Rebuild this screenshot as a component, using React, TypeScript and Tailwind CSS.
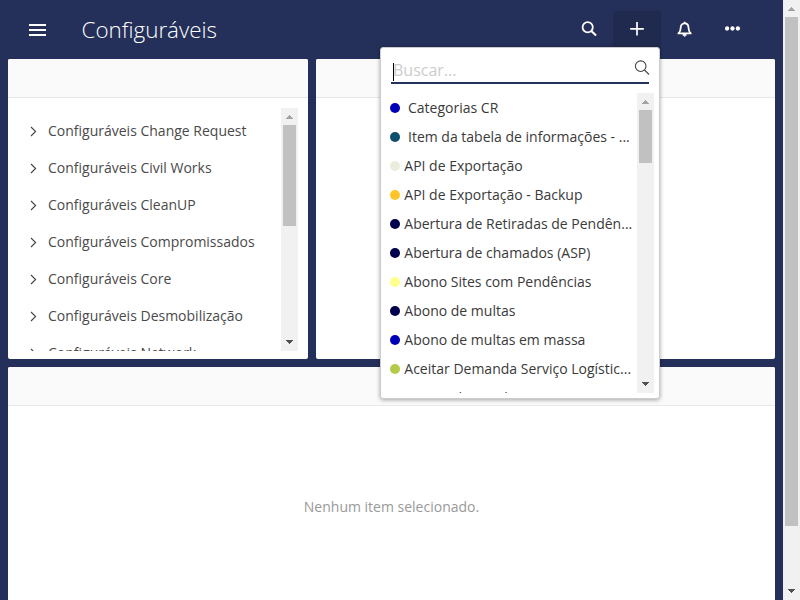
import React from "react";

const folders = ["Change Request", "Civil Works", "CleanUP", "Compromissados", "Core", "Desmobilização", "Network"];

const processes = [
  { color: "bg-[#0000b8]", label: "Categorias CR", indent: true },
  { color: "bg-[#0b4f6c]", label: "Item da tabela de informações - ...", indent: true },
  { color: "bg-[#ebecdc]", label: "API de Exportação" },
  { color: "bg-[#ffc425]", label: "API de Exportação - Backup" },
  { color: "bg-[#00004d]", label: "Abertura de Retiradas de Pendên..." },
  { color: "bg-[#00004d]", label: "Abertura de chamados (ASP)" },
  { color: "bg-[#ffff8c]", label: "Abono Sites com Pendências" },
  { color: "bg-[#00004d]", label: "Abono de multas" },
  { color: "bg-[#0000b8]", label: "Abono de multas em massa" },
  { color: "bg-[#b2cb48]", label: "Aceitar Demanda Serviço Logístic..." },
  { color: "bg-white", label: "Aceitar demanda" },
];

function Scrollbar({ className, thumb }: { className: string; thumb: string }) {
  return (
    <div className={`flex w-[17px] shrink-0 flex-col items-center bg-[#f1f1f1] ${className}`}>
      <svg width="17" height="17" className="shrink-0" shapeRendering="crispEdges">
        <path d="M5 11h7v-1h-1v-1h-1v-1h-1v-1h-1v1h-1v1h-1v1h-1z" fill="#a3a3a3" />
      </svg>
      <div className={`w-[13px] shrink-0 bg-[#c1c1c1] ${thumb}`} />
      <svg width="17" height="17" className="mt-auto shrink-0" shapeRendering="crispEdges">
        <path d="M5 6h7v1h-1v1h-1v1h-1v1h-1v-1h-1v-1h-1v-1h-1z" fill="#505050" />
      </svg>
    </div>
  );
}

function PanelHeader() {
  return <div className="h-[39px] shrink-0 border-b border-[#e8e8e8] bg-[#fafafa]" />;
}

function CreateMenu() {
  return (
    <div className="absolute top-[47px] left-[380px] flex h-[352px] w-[280px] flex-col rounded-[3px] border border-[#ccc] bg-white shadow-[0_1px_4px_rgba(0,0,0,0.35)]">
      <div className="mx-[10px] mt-[9px] flex h-[27px] shrink-0 items-start border-b-2 border-[#24305e]">
        <div className="mt-[6px] ml-[2px] h-[18px] w-px bg-black" />
        <span className="-ml-px mt-[1px] text-[16px] leading-[24px] text-[#ccc]">Buscar...</span>
        <svg width="16" height="16" viewBox="0 0 16 16" className="mt-[3px] ml-auto -mr-px" fill="none" stroke="#444" strokeWidth="1.1">
          <circle cx="6.7" cy="6.2" r="5.3" />
          <path d="M10.5 10 15 14.5" />
        </svg>
      </div>
      <div className="mt-[9px] mr-[5px] ml-[9px] flex h-[300px] overflow-hidden">
        <div className="min-w-0 grow">
          {processes.map((p) => (
            <div key={p.label} className="flex h-[29px] items-center whitespace-nowrap text-[14px] text-[#3a3a3a]">
              <span className={`size-[10px] shrink-0 rounded-full ${p.color} ${p.indent ? "mr-[8px]" : "mr-[4.3px]"}`} />
              {p.label}
            </div>
          ))}
        </div>
        <Scrollbar className="h-[300px]" thumb="h-[53px]" />
      </div>
    </div>
  );
}

export default function App() {
  return (
    <div className="relative flex h-[600px] w-[800px] overflow-hidden bg-[#24305a] font-['Open_Sans',sans-serif]">
      <div className="flex w-[783px] shrink-0 flex-col">
        <header className="flex h-[59px] shrink-0 text-white">
          <svg width="17" height="12" className="mt-[24px] ml-[29px]" shapeRendering="crispEdges">
            <path d="M0 0h17v2H0zM0 5h17v2H0zM0 10h17v2H0z" fill="white" />
          </svg>
          <h1 className="mt-[14px] ml-[35.5px] text-[22.4px] leading-[32px] font-light">Configuráveis</h1>
          <nav className="mt-[11px] mr-[26px] ml-auto flex h-9">
            <span className="flex w-12 justify-center">
              <svg width="16" height="16" viewBox="0 0 16 16" className="mt-[10px]" fill="none" stroke="white" strokeWidth="1.8">
                <circle cx="6.7" cy="6.3" r="5.1" />
                <path d="m10.3 10.1 4.8 4.5" strokeWidth="2" />
              </svg>
            </span>
            <span className="flex w-12 justify-center rounded-t-[3px] bg-[#202a4f]">
              <svg width="16" height="16" viewBox="0 0 16 16" className="mt-[10px]" stroke="white" strokeWidth="1.7">
                <path d="M8 1v13.6M1.2 7.8h13.6" />
              </svg>
            </span>
            <span className="flex w-12 justify-center">
              <svg width="16" height="16" viewBox="0 0 16 16" className="mt-[10px]" fill="none" stroke="white" strokeWidth="1.8">
                <path d="M1.4 12.4c2-1.7 2.3-3.2 2.3-5.6 0-2.6 1.5-4.4 3.9-4.4s3.9 1.8 3.9 4.4c0 2.4.3 3.9 2.3 5.6z" strokeLinejoin="round" />
                <path d="M7.6 .7v2M5.7 13.8h3.8" />
                <path d="M6.9 15.1h1.4" strokeWidth="1.2" />
              </svg>
            </span>
            <span className="flex w-12 justify-center">
              <svg width="16" height="16" viewBox="0 0 16 16" className="mt-[10px]" fill="white">
                <circle cx="2.1" cy="7.5" r="2.15" />
                <circle cx="7.5" cy="7.5" r="2.15" />
                <circle cx="12.9" cy="7.5" r="2.15" />
              </svg>
            </span>
          </nav>
        </header>
        <main className="flex min-h-0 grow flex-col gap-2 px-2">
          <div className="flex h-[300px] shrink-0 gap-2">
            <section className="flex w-[300px] shrink-0 flex-col overflow-hidden rounded-[2px] bg-white">
              <PanelHeader />
              <div className="mt-[10px] mr-[10px] flex h-[243px] overflow-hidden">
                <ul className="grow pt-[4px] pl-[22px]">
                  {folders.map((name) => (
                    <li key={name} className="flex h-[37px] items-center text-[14px] whitespace-nowrap text-[#4a4a4a]">
                      <svg width="8" height="11" viewBox="0 0 8 11" className="mt-[2px] mr-[10px]" fill="none" stroke="#444" strokeWidth="1.1">
                        <path d="M1 1l4.6 4.5L1 10" />
                      </svg>
                      Configuráveis {name}
                    </li>
                  ))}
                </ul>
                <Scrollbar className="h-[243px]" thumb="h-[101px]" />
              </div>
            </section>
            <section className="grow overflow-hidden rounded-[2px] bg-white">
              <PanelHeader />
            </section>
          </div>
          <section className="flex grow flex-col overflow-hidden rounded-t-[2px] bg-white">
            <PanelHeader />
            <p className="mt-[91px] text-center text-[14px] leading-5 text-[#999]">Nenhum item selecionado.</p>
          </section>
        </main>
      </div>
      <Scrollbar className="h-[600px]" thumb="h-[509px]" />
      <CreateMenu />
    </div>
  );
}
